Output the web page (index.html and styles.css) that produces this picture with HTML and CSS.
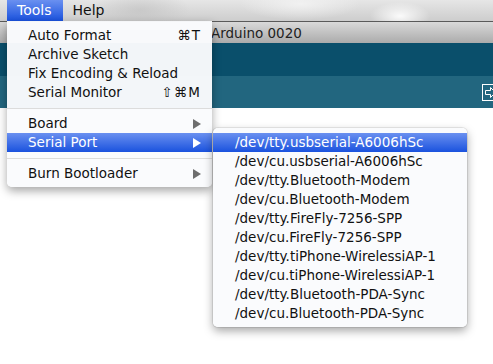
FILE: index.html
```html
<!DOCTYPE html>
<html lang="en">
<head>
    <meta charset="UTF-8">
    <title>Arduino 0020 - Tools menu</title>
    <link rel="stylesheet" href="styles.css">
</head>
<body>
    <div class="screen">
        <!-- system menu bar -->
        <div class="menubar">
            <span class="menubar-item active">Tools</span>
            <span class="menubar-item">Help</span>
        </div>

        <!-- arduino window -->
        <div class="window">
            <div class="titlebar">
                <span class="title">Arduino 0020</span>
            </div>
            <div class="toolbar"></div>
            <div class="tabbar">
                <svg class="tab-icon" width="17" height="17" viewBox="0 0 17 17">
                    <rect x="0.5" y="0.5" width="16" height="16" fill="none" stroke="#fff"/>
                    <path d="M3.5 6.5 H8.5 V3.5 L13.5 8.5 L8.5 13.5 V10.5 H3.5 Z" fill="none" stroke="#fff"/>
                </svg>
            </div>
            <div class="editor"></div>
        </div>

        <!-- Tools menu -->
        <div class="menu tools-menu">
            <div class="item"><span>Auto Format</span><span class="key">⌘T</span></div>
            <div class="item"><span>Archive Sketch</span></div>
            <div class="item"><span>Fix Encoding &amp; Reload</span></div>
            <div class="item"><span>Serial Monitor</span><span class="key">⇧⌘M</span></div>
            <div class="separator"></div>
            <div class="item"><span>Board</span><span class="arrow"></span></div>
            <div class="item selected"><span>Serial Port</span><span class="arrow"></span></div>
            <div class="separator"></div>
            <div class="item"><span>Burn Bootloader</span><span class="arrow"></span></div>
        </div>

        <!-- Serial Port submenu -->
        <div class="menu submenu">
            <div class="item selected">/dev/tty.usbserial-A6006hSc</div>
            <div class="item">/dev/cu.usbserial-A6006hSc</div>
            <div class="item">/dev/tty.Bluetooth-Modem</div>
            <div class="item">/dev/cu.Bluetooth-Modem</div>
            <div class="item">/dev/tty.FireFly-7256-SPP</div>
            <div class="item">/dev/cu.FireFly-7256-SPP</div>
            <div class="item">/dev/tty.tiPhone-WirelessiAP-1</div>
            <div class="item">/dev/cu.tiPhone-WirelessiAP-1</div>
            <div class="item">/dev/tty.Bluetooth-PDA-Sync</div>
            <div class="item">/dev/cu.Bluetooth-PDA-Sync</div>
        </div>
    </div>
</body>
</html>
```

FILE: styles.css
```css
:root {
    --menu-bg: rgba(250, 251, 253, 0.97);
    --select-top: #6a90f0;
    --select-bottom: #1a52de;
    --teal-dark: #0a4f6b;
    --teal-light: #22667f;
}

body {
    margin: 0;
    padding: 0;
    background: #fff;
    font-family: 'DejaVu Sans', sans-serif;
    font-size: 13px;
    color: #111;
}

.screen {
    position: relative;
    width: 493px;
    height: 364px;
    overflow: hidden;
    background: #fff;
}

/* menu bar */

.menubar {
    height: 21px;
    display: flex;
    padding-left: 7px;
    background:
        radial-gradient(ellipse 30px 14px at 400px 16px, rgba(255, 255, 255, 0.9), rgba(255, 255, 255, 0)),
        radial-gradient(ellipse 60px 16px at 300px 4px, rgba(245, 245, 245, 0.8), rgba(255, 255, 255, 0)),
        radial-gradient(ellipse 50px 20px at 140px 10px, rgba(190, 190, 190, 0.6), rgba(190, 190, 190, 0)),
        linear-gradient(#e6e6e6, #cdcdcd);
}

.menubar-item {
    padding: 0 11px 0 10px;
    line-height: 21px;
    font-size: 14px;
    color: #111;
}

.menubar-item.active {
    color: #fff;
    background: linear-gradient(var(--select-top), var(--select-bottom));
}

/* window */

.titlebar {
    height: 21px;
    border-top: 1px solid #5a5a5a;
    background: linear-gradient(#d9d9d9, #ababab);
    display: flex;
    align-items: center;
    padding-left: 211px;
}

.title {
    font-size: 13.5px;
    color: #222;
}

.toolbar {
    height: 33px;
    background: var(--teal-dark);
}

.tabbar {
    height: 32px;
    background: var(--teal-light);
    display: flex;
    justify-content: flex-end;
    align-items: center;
    margin-right: -6px;
}

.tab-icon {
    display: block;
}

.editor {
    height: 256px;
    background: #fff;
}

/* menus */

.menu {
    position: absolute;
    background: var(--menu-bg);
    box-shadow: 0 4px 10px rgba(0, 0, 0, 0.35);
    border-radius: 0 0 5px 5px;
    padding: 5px 0 4px;
}

.tools-menu {
    left: 7px;
    top: 21px;
    width: 205px;
}

.submenu {
    left: 213px;
    top: 128px;
    width: 254px;
    border-radius: 5px;
    box-shadow: 0 4px 10px rgba(0, 0, 0, 0.35), 0 0 0 1px rgba(0, 0, 0, 0.08);
}

.item {
    height: 19px;
    line-height: 19px;
    font-size: 13.5px;
    display: flex;
    justify-content: space-between;
    align-items: center;
    padding: 0 11px 0 21px;
    color: #111;
    white-space: nowrap;
}

.submenu .item {
    padding-left: 22px;
}

.item.selected {
    color: #fff;
    background: linear-gradient(var(--select-top), var(--select-bottom));
}

.key {
    letter-spacing: 1px;
}

.arrow {
    width: 0;
    height: 0;
    border-left: 8px solid #6e6e6e;
    border-top: 5px solid transparent;
    border-bottom: 5px solid transparent;
}

.item.selected .arrow {
    border-left-color: #fff;
}

.separator {
    height: 1px;
    margin: 6px 0 5px;
    background: #dcdcdc;
}
```
